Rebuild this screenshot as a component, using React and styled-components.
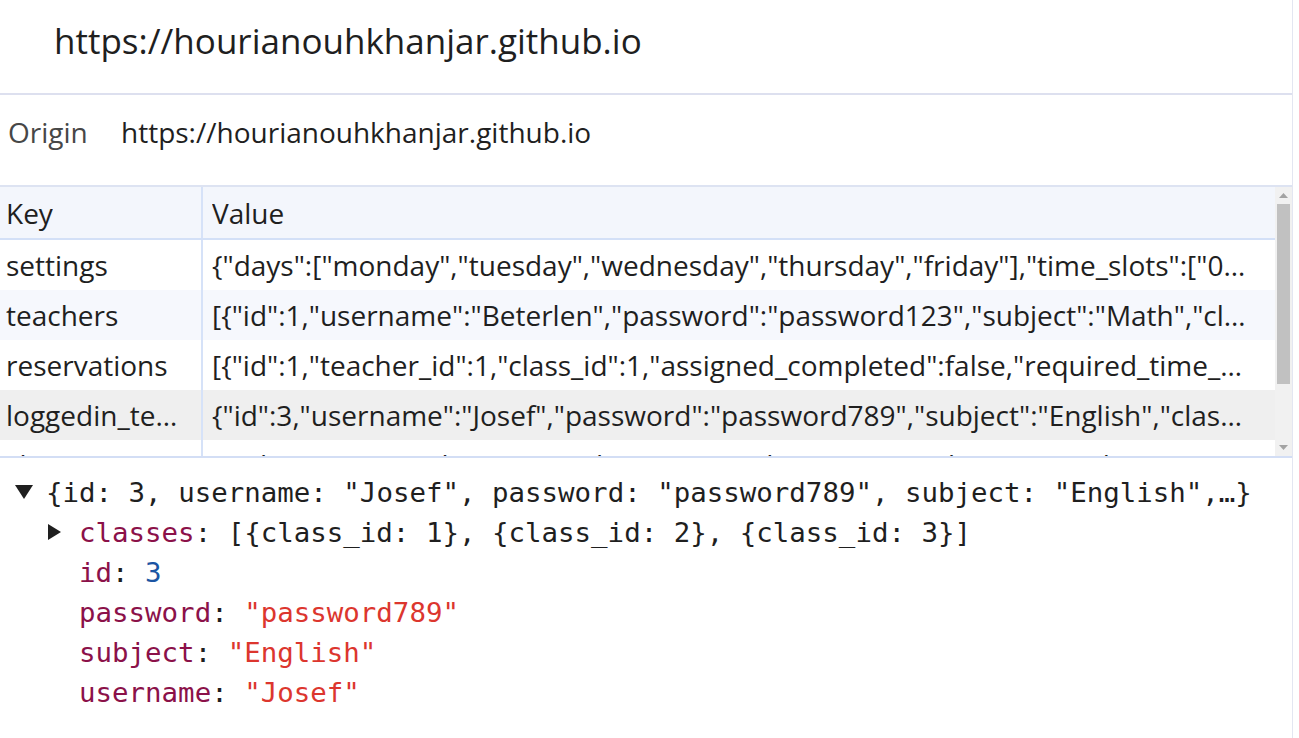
import React from "react";
import styled, { createGlobalStyle } from "styled-components";

const Global = createGlobalStyle`
  html, body { margin: 0; padding: 0; background: #ffffff; }
  body { font-family: "Open Sans", "Noto Sans", sans-serif; color: #1f1f1f; }
`;

const Page = styled.div`
  width: 1299px;
  height: 738px;
  overflow: hidden;
  background: #ffffff;
`;

const Panel = styled.div`
  width: 1292px;
  height: 738px;
  border-right: 1px solid #e3e6f1;
  display: flex;
  flex-direction: column;
`;

const TitleBar = styled.div`
  height: 95px;
  flex: none;
  display: flex;
  align-items: center;
  padding-left: 54px;
  padding-bottom: 12px;
  box-sizing: border-box;
  border-bottom: 2px solid #dde0ef;
  font-size: 35px;
  color: #1f1f1f;
`;

const OriginRow = styled.div`
  height: 92px;
  flex: none;
  display: flex;
  align-items: center;
  box-sizing: border-box;
  border-bottom: 2px solid #dde3f2;
  font-size: 28px;
  padding-bottom: 16px;
`;

const OriginLabel = styled.span`
  color: #474747;
  padding-left: 8px;
  width: 113px;
`;

const OriginValue = styled.span`
  color: #1f1f1f;
`;

const TableArea = styled.div`
  height: 271px;
  flex: none;
  display: flex;
  box-sizing: border-box;
  border-bottom: 2px solid #d3def5;
  overflow: hidden;
`;

const Table = styled.div`
  flex: 1;
  display: flex;
  flex-direction: column;
  overflow: hidden;
`;

const Row = styled.div`
  display: grid;
  grid-template-columns: 201px 1fr;
  flex: none;
  height: ${(p) => p.$h || 50}px;
  background: ${(p) => p.$bg || "#ffffff"};
  border-bottom: ${(p) => (p.$head ? "2px solid #d3e0f7" : "none")};
  box-sizing: border-box;
`;

const Cell = styled.div`
  display: flex;
  align-items: ${(p) => (p.$top ? "flex-start" : "center")};
  padding: ${(p) => (p.$key ? "0 12px 0 6px" : "0 20px 0 9px")};
  border-left: ${(p) => (p.$key ? "none" : "2px solid #d6e2f8")};
  font-size: 28px;
  color: #1f1f1f;
  min-width: 0;
  overflow: hidden;
  padding-top: ${(p) => (p.$top ? "6px" : "0")};
`;

const CellText = styled.span`
  white-space: nowrap;
  overflow: hidden;
  text-overflow: ellipsis;
  display: block;
  min-width: 0;
`;

const ScrollBar = styled.div`
  width: 17px;
  flex: none;
  background: #f1f1f1;
  display: flex;
  flex-direction: column;
  align-items: center;
`;

const ScrollArrow = styled.div`
  height: 17px;
  width: 17px;
  flex: none;
  display: flex;
  align-items: center;
  justify-content: center;
`;

const ScrollTrack = styled.div`
  flex: 1;
  width: 100%;
  display: flex;
  justify-content: center;
`;

const Thumb = styled.div`
  width: 13px;
  height: 180px;
  background: #c1c1c1;
`;

const Preview = styled.div`
  flex: 1;
  padding: 14px 0 0 15px;
  font-family: "DejaVu Sans Mono", "Liberation Mono", monospace;
  font-size: 27.45px;
  color: #1f1f1f;
`;

const Line = styled.div`
  height: 40px;
  display: flex;
  align-items: center;
  white-space: pre;
  padding-left: ${(p) => p.$indent || 0}px;
`;

const Toggle = styled.span`
  width: 31px;
  flex: none;
  display: flex;
  align-items: center;
`;

const Spacer = styled.span`
  width: 31px;
  flex: none;
`;

const Key = styled.span`
  color: #8b1149;
`;
const Str = styled.span`
  color: #dc362e;
`;
const Num = styled.span`
  color: #1b55a3;
`;

const DownTri = () => (
  <svg width="18" height="14" viewBox="0 0 18 14">
    <path d="M0 0 H18 L9 14 Z" fill="#1f1f1f" />
  </svg>
);
const RightTri = () => (
  <svg width="13" height="16" viewBox="0 0 13 16">
    <path d="M0 0 L13 8 L0 16 Z" fill="#1f1f1f" />
  </svg>
);
const UpArrow = () => (
  <svg width="9" height="5" viewBox="0 0 9 5">
    <path d="M0 5 L4.5 0 L9 5 Z" fill="#a3a3a3" />
  </svg>
);
const DownArrow = () => (
  <svg width="9" height="5" viewBox="0 0 9 5">
    <path d="M0 0 L4.5 5 L9 0 Z" fill="#a3a3a3" />
  </svg>
);

const rows = [
  {
    k: "settings",
    v: '{"days":["monday","tuesday","wednesday","thursday","friday"],"time_slots":["08:00-09:00","09:00-10:00"]}',
    bg: "#ffffff",
  },
  {
    k: "teachers",
    v: '[{"id":1,"username":"Beterlen","password":"password123","subject":"Math","classes":[{"class_id":1}]}]',
    bg: "#f6f8fd",
  },
  {
    k: "reservations",
    v: '[{"id":1,"teacher_id":1,"class_id":1,"assigned_completed":false,"required_time_slots":2}]',
    bg: "#ffffff",
  },
  {
    k: "loggedin_teacher",
    v: '{"id":3,"username":"Josef","password":"password789","subject":"English","classes":[{"class_id":1}]}',
    bg: "#efefef",
  },
];

export default function App() {
  return (
    <Page>
      <Global />
      <Panel>
        <TitleBar>https://hourianouhkhanjar.github.io</TitleBar>
        <OriginRow>
          <OriginLabel>Origin</OriginLabel>
          <OriginValue>https://hourianouhkhanjar.github.io</OriginValue>
        </OriginRow>
        <TableArea>
          <Table>
            <Row $head $h={53} $bg="#f3f6fc">
              <Cell $key>
                <CellText>Key</CellText>
              </Cell>
              <Cell>
                <CellText>Value</CellText>
              </Cell>
            </Row>
            {rows.map((r) => (
              <Row key={r.k} $bg={r.bg}>
                <Cell $key>
                  <CellText>{r.k}</CellText>
                </Cell>
                <Cell>
                  <CellText>{r.v}</CellText>
                </Cell>
              </Row>
            ))}
            <Row $bg="#ffffff">
              <Cell $key $top>
                <CellText>classes</CellText>
              </Cell>
              <Cell $top>
                <CellText>{'[{"id":1,"name":"Class A","students":24},{"id":2,"name":"Class B","students":21}]'}</CellText>
              </Cell>
            </Row>
          </Table>
          <ScrollBar>
            <ScrollArrow>
              <UpArrow />
            </ScrollArrow>
            <ScrollTrack>
              <Thumb />
            </ScrollTrack>
            <ScrollArrow>
              <DownArrow />
            </ScrollArrow>
          </ScrollBar>
        </TableArea>
        <Preview>
          <Line>
            <Toggle>
              <DownTri />
            </Toggle>
            {'{id: 3, username: "Josef", password: "password789", subject: "English",…}'}
          </Line>
          <Line $indent={33}>
            <Toggle>
              <RightTri />
            </Toggle>
            <Key>classes</Key>
            {": [{class_id: 1}, {class_id: 2}, {class_id: 3}]"}
          </Line>
          <Line $indent={33}>
            <Spacer />
            <Key>id</Key>
            {": "}
            <Num>3</Num>
          </Line>
          <Line $indent={33}>
            <Spacer />
            <Key>password</Key>
            {": "}
            <Str>"password789"</Str>
          </Line>
          <Line $indent={33}>
            <Spacer />
            <Key>subject</Key>
            {": "}
            <Str>"English"</Str>
          </Line>
          <Line $indent={33}>
            <Spacer />
            <Key>username</Key>
            {": "}
            <Str>"Josef"</Str>
          </Line>
        </Preview>
      </Panel>
    </Page>
  );
}
